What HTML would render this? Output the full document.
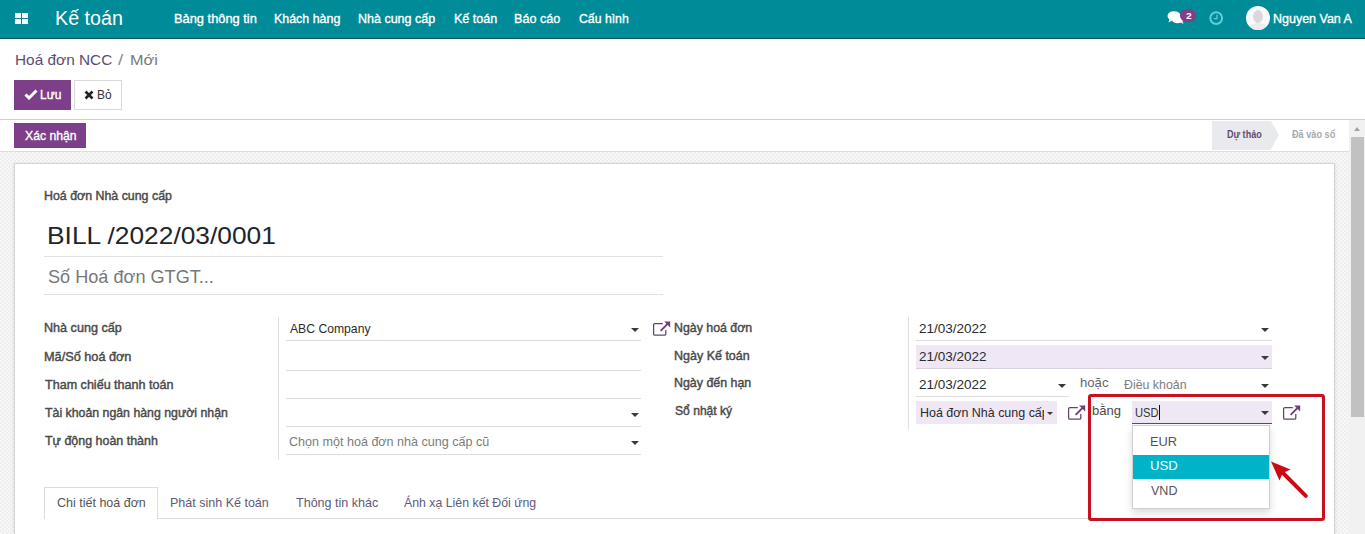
<!DOCTYPE html>
<html><head><meta charset="utf-8">
<style>
*{box-sizing:border-box;margin:0;padding:0}
html,body{width:1365px;height:534px;overflow:hidden;background:#fff;font-family:"Liberation Sans",sans-serif;font-size:13px;color:#212529;position:relative}
.r{position:absolute}
.t{position:absolute;white-space:nowrap;line-height:30px;font-family:"Liberation Sans",sans-serif}
.ul{position:absolute;height:1px;background:#dcdcdc}
.caret{position:absolute;width:0;height:0;border-left:4px solid transparent;border-right:4px solid transparent;border-top:4px solid #3a3a3a}
.pur{background:#efe7f3}
</style></head><body>
<!-- navbar -->
<div class="r" style="left:0;top:0;width:1365px;height:38px;background:#008b99"></div>
<div class="r" style="left:0;top:38px;width:1365px;height:1px;background:#0b5560"></div>
<div class="r" style="left:15px;top:13px;width:6px;height:5px;background:#fff"></div>
<div class="r" style="left:22px;top:13px;width:6px;height:5px;background:#fff"></div>
<div class="r" style="left:15px;top:19px;width:6px;height:5px;background:#fff"></div>
<div class="r" style="left:22px;top:19px;width:6px;height:5px;background:#fff"></div>
<!-- chat icon -->
<svg class="r" style="left:1166px;top:9px" width="20" height="17" viewBox="0 0 20 17">
  <ellipse cx="8" cy="7" rx="6.5" ry="4.8" fill="#fff"/>
  <path d="M3.5 10 L2.5 13.5 L7 11 Z" fill="#fff"/>
  <ellipse cx="11.5" cy="10.5" rx="5.5" ry="3.8" fill="#fff"/>
  <path d="M14 13 L17.5 15 L16 11 Z" fill="#fff"/>
</svg>
<div class="r" style="left:1180px;top:9px;width:16px;height:13px;border-radius:7px;background:#853d88"></div>
<!-- clock -->
<svg class="r" style="left:1208px;top:10px" width="16" height="16" viewBox="0 0 16 16">
  <circle cx="8.2" cy="8.1" r="5.9" fill="none" stroke="#5cd0da" stroke-width="2"/>
  <path d="M9 4.8 V8.6 H5.8" fill="none" stroke="#5cd0da" stroke-width="1.3"/>
</svg>
<!-- avatar -->
<div class="r" style="left:1246px;top:6px;width:24px;height:24px;border-radius:50%;background:#fbfbfb;overflow:hidden">
  <div class="r" style="left:7px;top:4px;width:10px;height:13px;border-radius:50%;background:#d9d9d9"></div>
  <div class="r" style="left:3px;top:17px;width:18px;height:12px;border-radius:50% 50% 0 0;background:#ececec"></div>
</div>

<!-- control panel -->
<div class="r" style="left:14px;top:80px;width:57px;height:30px;background:#7d3f89"></div>
<svg class="r" style="left:24px;top:89px" width="14" height="11" viewBox="0 0 14 11">
  <path d="M1.5 5.5 L5 9 L12.5 1.5" fill="none" stroke="#fff" stroke-width="3"/>
</svg>
<div class="r" style="left:74px;top:80px;width:48px;height:30px;background:#fff;border:1px solid #d9d9d9"></div>
<svg class="r" style="left:84px;top:90px" width="10" height="10" viewBox="0 0 10 10">
  <path d="M1.5 1.5 L8.5 8.5 M8.5 1.5 L1.5 8.5" fill="none" stroke="#222" stroke-width="2.6"/>
</svg>
<div class="r" style="left:0;top:119px;width:1365px;height:1px;background:#cfcfcf"></div>
<div class="r" style="left:14px;top:123px;width:72px;height:25px;background:#7d3f89"></div>
<div class="r" style="left:1212px;top:121px;width:59px;height:29px;background:#e8eaee"></div>
<div class="r" style="left:1271px;top:121px;width:0;height:0;border-top:14.5px solid transparent;border-bottom:14.5px solid transparent;border-left:8px solid #e8eaee"></div>
<div class="r" style="left:0;top:151px;width:1349px;height:1px;background:#dedede"></div>

<!-- background -->
<div class="r" style="left:0;top:152px;width:1349px;height:382px;background-color:#f3f3f3;background-image:repeating-conic-gradient(#eeeeee 0 25%, #f8f8f8 0 50%);background-size:4px 4px"></div>
<!-- sheet -->
<div class="r" style="left:14px;top:163px;width:1321px;height:400px;background:#fff;border:1px solid #d4d4d4;box-shadow:0 1px 4px rgba(0,0,0,.10)"></div>

<!-- form lines -->
<div class="ul" style="left:44px;top:256px;width:619px;background:#e2e2e2"></div>
<div class="ul" style="left:44px;top:294px;width:619px;background:#e2e2e2"></div>

<div class="r" style="left:278px;top:317px;width:1px;height:143px;background:#e0e0e0"></div>
<div class="ul" style="left:286px;top:340px;width:355px"></div>
<div class="ul" style="left:286px;top:370px;width:355px"></div>
<div class="ul" style="left:286px;top:398px;width:355px"></div>
<div class="ul" style="left:286px;top:426px;width:355px"></div>
<div class="ul" style="left:286px;top:454px;width:355px"></div>
<div class="caret" style="left:631px;top:328px"></div>
<div class="caret" style="left:631px;top:413px"></div>
<div class="caret" style="left:631px;top:441px"></div>
<svg class="r" style="left:652px;top:320px" width="19" height="17" viewBox="0 0 19 17">
  <path d="M10.8 3.6 H3 Q1.6 3.6 1.6 5 V13.9 Q1.6 15.2 3 15.2 H12.4 Q13.8 15.2 13.8 13.9 V10" fill="none" stroke="#5e4766" stroke-width="1.25"/>
  <path d="M8.6 10.8 L15.6 3.8" fill="none" stroke="#6e3c7a" stroke-width="1.9"/>
  <path d="M12.2 1.4 H18.2 V7.4 Z" fill="#703c7c"/>
</svg>

<div class="r" style="left:908px;top:317px;width:1px;height:113px;background:#e0e0e0"></div>
<div class="ul" style="left:916px;top:340px;width:356px"></div>
<div class="caret" style="left:1261px;top:328px"></div>
<div class="r pur" style="left:916px;top:345px;width:356px;height:23px"></div>
<div class="ul" style="left:916px;top:368px;width:356px;background:#d8d0dc"></div>
<div class="caret" style="left:1261px;top:356px"></div>
<div class="ul" style="left:916px;top:396px;width:153px"></div>
<div class="caret" style="left:1058px;top:384px"></div>
<div class="ul" style="left:1116px;top:396px;width:156px"></div>
<div class="caret" style="left:1261px;top:384px"></div>
<div class="r pur" style="left:916px;top:401px;width:141px;height:23px"></div>
<div class="r" style="left:916px;top:401px;width:128px;height:23px;overflow:hidden">
<div class="t" style="left:3.54px;top:-3.00px;font-size:13px;font-weight:400;color:#2b2b2b;transform:scaleX(0.9586);transform-origin:0 0;">Hoá đơn Nhà cung cấp</div>
</div>
<div class="caret" style="left:1047px;top:412px;border-left-width:3px;border-right-width:3px;border-top-width:3px"></div>
<svg class="r" style="left:1067px;top:404px" width="19" height="17" viewBox="0 0 19 17">
  <path d="M10.8 3.6 H3 Q1.6 3.6 1.6 5 V13.9 Q1.6 15.2 3 15.2 H12.4 Q13.8 15.2 13.8 13.9 V10" fill="none" stroke="#5e4766" stroke-width="1.25"/>
  <path d="M8.6 10.8 L15.6 3.8" fill="none" stroke="#6e3c7a" stroke-width="1.9"/>
  <path d="M12.2 1.4 H18.2 V7.4 Z" fill="#703c7c"/>
</svg>
<div class="r pur" style="left:1132px;top:401px;width:140px;height:23px"></div>
<div class="r" style="left:1132px;top:423px;width:140px;height:1px;background:#5e4a66"></div>
<div class="caret" style="left:1261px;top:411px"></div>
<div class="r" style="left:1159px;top:405px;width:1px;height:15px;background:#111"></div>
<svg class="r" style="left:1282px;top:404px" width="19" height="17" viewBox="0 0 19 17">
  <path d="M10.8 3.6 H3 Q1.6 3.6 1.6 5 V13.9 Q1.6 15.2 3 15.2 H12.4 Q13.8 15.2 13.8 13.9 V10" fill="none" stroke="#5e4766" stroke-width="1.25"/>
  <path d="M8.6 10.8 L15.6 3.8" fill="none" stroke="#6e3c7a" stroke-width="1.9"/>
  <path d="M12.2 1.4 H18.2 V7.4 Z" fill="#703c7c"/>
</svg>

<!-- tabs -->
<div class="ul" style="left:44px;top:518px;width:1045px"></div>
<div class="r" style="left:44px;top:487px;width:114px;height:32px;background:#fff;border:1px solid #dcdcdc;border-bottom:none"></div>

<!-- dropdown -->
<div class="r" style="left:1132px;top:425px;width:138px;height:84px;background:#fff;border:1px solid #cfcfcf;box-shadow:0 4px 8px rgba(0,0,0,.15)"></div>
<div class="r" style="left:1133px;top:455px;width:136px;height:24px;background:#00b3c7"></div>

<div class="t" style="left:55.23px;top:2.50px;font-size:20px;font-weight:400;color:#ffffff;transform:scaleX(0.9848);transform-origin:0 0;">Kế toán</div>
<div class="t" style="left:174.01px;top:4.00px;font-size:13px;font-weight:400;color:#ffffff;transform:scaleX(0.9878);transform-origin:0 0;-webkit-text-stroke:0.35px currentColor;">Bảng thông tin</div>
<div class="t" style="left:273.54px;top:4.00px;font-size:13px;font-weight:400;color:#ffffff;transform:scaleX(0.9559);transform-origin:0 0;-webkit-text-stroke:0.35px currentColor;">Khách hàng</div>
<div class="t" style="left:358.04px;top:4.00px;font-size:13px;font-weight:400;color:#ffffff;transform:scaleX(0.9620);transform-origin:0 0;-webkit-text-stroke:0.35px currentColor;">Nhà cung cấp</div>
<div class="t" style="left:453.53px;top:4.00px;font-size:13px;font-weight:400;color:#ffffff;transform:scaleX(0.9651);transform-origin:0 0;-webkit-text-stroke:0.35px currentColor;">Kế toán</div>
<div class="t" style="left:514.03px;top:4.00px;font-size:13px;font-weight:400;color:#ffffff;transform:scaleX(0.9681);transform-origin:0 0;-webkit-text-stroke:0.35px currentColor;">Báo cáo</div>
<div class="t" style="left:579.00px;top:4.00px;font-size:13px;font-weight:400;color:#ffffff;transform:scaleX(0.9423);transform-origin:0 0;-webkit-text-stroke:0.35px currentColor;">Cấu hình</div>
<div class="t" style="left:1272.84px;top:4.00px;font-size:13px;font-weight:400;color:#ffffff;transform:scaleX(0.9605);transform-origin:0 0;-webkit-text-stroke:0.35px currentColor;">Nguyen Van A</div>
<div class="t" style="left:1185.80px;top:1.40px;font-size:9.5px;font-weight:700;color:#ffffff;transform:scaleX(1.0800);transform-origin:0 0;">2</div>
<div class="t" style="left:14.57px;top:45.00px;font-size:15px;font-weight:400;color:#585070;transform:scaleX(1.0258);transform-origin:0 0;">Hoá đơn NCC</div>
<div class="t" style="left:118.00px;top:45.00px;font-size:15px;font-weight:400;color:#8a8a8a;transform:scaleX(1.2500);transform-origin:0 0;">/</div>
<div class="t" style="left:129.92px;top:45.00px;font-size:15px;font-weight:400;color:#7a7a7a;transform:scaleX(1.0833);transform-origin:0 0;">Mới</div>
<div class="t" style="left:39.78px;top:80.30px;font-size:13px;font-weight:400;color:#ffffff;transform:scaleX(0.9227);transform-origin:0 0;-webkit-text-stroke:0.35px currentColor;">Lưu</div>
<div class="t" style="left:97.28px;top:80.30px;font-size:13px;font-weight:400;color:#333333;transform:scaleX(0.9200);transform-origin:0 0;">Bỏ</div>
<div class="t" style="left:24.60px;top:121.30px;font-size:13px;font-weight:400;color:#ffffff;transform:scaleX(0.9382);transform-origin:0 0;-webkit-text-stroke:0.35px currentColor;">Xác nhận</div>
<div class="t" style="left:1226.59px;top:120.00px;font-size:10px;font-weight:700;color:#634f6c;transform:scaleX(0.9054);transform-origin:0 0;">Dự thảo</div>
<div class="t" style="left:1291.60px;top:120.00px;font-size:10px;font-weight:700;color:#a8a8b0;transform:scaleX(0.9149);transform-origin:0 0;">Đã vào sổ</div>
<div class="t" style="left:44.15px;top:181.00px;font-size:13px;font-weight:400;color:#4a4a4a;transform:scaleX(0.9526);transform-origin:0 0;-webkit-text-stroke:0.45px currentColor;">Hoá đơn Nhà cung cấp</div>
<div class="t" style="left:47.31px;top:221.30px;font-size:24px;font-weight:400;color:#212529;transform:scaleX(1.0971);transform-origin:0 0;">BILL /2022/03/0001</div>
<div class="t" style="left:47.99px;top:262.00px;font-size:18px;font-weight:400;color:#787878;transform:scaleX(1.0062);transform-origin:0 0;">Số Hoá đơn GTGT...</div>
<div class="t" style="left:44.03px;top:312.50px;font-size:13px;font-weight:400;color:#4a4a4a;transform:scaleX(0.9684);transform-origin:0 0;-webkit-text-stroke:0.45px currentColor;">Nhà cung cấp</div>
<div class="t" style="left:44.02px;top:342.30px;font-size:13px;font-weight:400;color:#4a4a4a;transform:scaleX(0.9773);transform-origin:0 0;-webkit-text-stroke:0.45px currentColor;">Mã/Số hoá đơn</div>
<div class="t" style="left:45.00px;top:370.30px;font-size:13px;font-weight:400;color:#4a4a4a;transform:scaleX(0.9662);transform-origin:0 0;-webkit-text-stroke:0.45px currentColor;">Tham chiếu thanh toán</div>
<div class="t" style="left:45.00px;top:398.30px;font-size:13px;font-weight:400;color:#4a4a4a;transform:scaleX(0.9482);transform-origin:0 0;-webkit-text-stroke:0.45px currentColor;">Tài khoản ngân hàng người nhận</div>
<div class="t" style="left:45.00px;top:426.30px;font-size:13px;font-weight:400;color:#4a4a4a;transform:scaleX(0.9573);transform-origin:0 0;-webkit-text-stroke:0.45px currentColor;">Tự động hoàn thành</div>
<div class="t" style="left:673.75px;top:312.50px;font-size:13px;font-weight:400;color:#4a4a4a;transform:scaleX(0.9506);transform-origin:0 0;-webkit-text-stroke:0.45px currentColor;">Ngày hoá đơn</div>
<div class="t" style="left:673.74px;top:340.50px;font-size:13px;font-weight:400;color:#4a4a4a;transform:scaleX(0.9610);transform-origin:0 0;-webkit-text-stroke:0.45px currentColor;">Ngày Kế toán</div>
<div class="t" style="left:673.75px;top:368.00px;font-size:13px;font-weight:400;color:#4a4a4a;transform:scaleX(0.9537);transform-origin:0 0;-webkit-text-stroke:0.45px currentColor;">Ngày đến hạn</div>
<div class="t" style="left:674.70px;top:396.00px;font-size:13px;font-weight:400;color:#4a4a4a;transform:scaleX(0.9306);transform-origin:0 0;-webkit-text-stroke:0.45px currentColor;">Sổ nhật ký</div>
<div class="t" style="left:290.00px;top:314.40px;font-size:13px;font-weight:400;color:#2b2b2b;transform:scaleX(0.9360);transform-origin:0 0;">ABC Company</div>
<div class="t" style="left:289.03px;top:427.00px;font-size:13px;font-weight:400;color:#7c7c7c;transform:scaleX(0.9660);transform-origin:0 0;">Chọn một hoá đơn nhà cung cấp cũ</div>
<div class="t" style="left:919.46px;top:313.80px;font-size:13px;font-weight:400;color:#2b2b2b;transform:scaleX(1.0391);transform-origin:0 0;">21/03/2022</div>
<div class="t" style="left:919.46px;top:342.00px;font-size:13px;font-weight:400;color:#2b2b2b;transform:scaleX(1.0391);transform-origin:0 0;">21/03/2022</div>
<div class="t" style="left:919.46px;top:369.70px;font-size:13px;font-weight:400;color:#2b2b2b;transform:scaleX(1.0391);transform-origin:0 0;">21/03/2022</div>
<div class="t" style="left:1079.79px;top:368.00px;font-size:13px;font-weight:400;color:#666666;transform:scaleX(1.0111);transform-origin:0 0;">hoặc</div>
<div class="t" style="left:1124.40px;top:369.60px;font-size:13px;font-weight:400;color:#7e7e7e;transform:scaleX(0.9508);transform-origin:0 0;">Điều khoản</div>
<div class="t" style="left:1092.00px;top:395.60px;font-size:13px;font-weight:400;color:#4a4a4a;">bằng</div>
<div class="t" style="left:1134.84px;top:397.80px;font-size:13px;font-weight:400;color:#333333;transform:scaleX(0.8577);transform-origin:0 0;">USD</div>
<div class="t" style="left:1150.31px;top:427.00px;font-size:13px;font-weight:400;color:#555555;transform:scaleX(0.9885);transform-origin:0 0;">EUR</div>
<div class="t" style="left:1150.29px;top:450.70px;font-size:13px;font-weight:400;color:#ffffff;transform:scaleX(1.0077);transform-origin:0 0;">USD</div>
<div class="t" style="left:1151.30px;top:476.00px;font-size:13px;font-weight:400;color:#555555;transform:scaleX(0.9630);transform-origin:0 0;">VND</div>
<div class="t" style="left:56.54px;top:488.00px;font-size:13px;font-weight:400;color:#555555;transform:scaleX(0.9615);transform-origin:0 0;">Chi tiết hoá đơn</div>
<div class="t" style="left:170.44px;top:488.00px;font-size:13px;font-weight:400;color:#5e5a78;transform:scaleX(0.9624);transform-origin:0 0;">Phát sinh Kế toán</div>
<div class="t" style="left:296.00px;top:488.00px;font-size:13px;font-weight:400;color:#5e5a78;transform:scaleX(0.9647);transform-origin:0 0;">Thông tin khác</div>
<div class="t" style="left:403.70px;top:488.00px;font-size:13px;font-weight:400;color:#5e5a78;transform:scaleX(0.9475);transform-origin:0 0;">Ánh xạ Liên kết Đối ứng</div>

<!-- red annotation -->
<div class="r" style="left:1088px;top:394px;width:237px;height:127px;border:3px solid #c8101e;border-radius:3px"></div>
<svg class="r" style="left:1265px;top:455px" width="50" height="48" viewBox="0 0 50 48">
  <path d="M6 6.4 L25.5 14.5 L19.5 17.2 L17 19.6 L14.5 25.5 Z" fill="#cc0a14"/>
  <path d="M16 16 L40.8 40.8" stroke="#cc0a14" stroke-width="4" stroke-linecap="round"/>
</svg>

<!-- scrollbar -->
<div class="r" style="left:1349px;top:120px;width:16px;height:414px;background:#f1f1f1"></div>
<div class="r" style="left:1354px;top:127px;width:0;height:0;border-left:3.5px solid transparent;border-right:3.5px solid transparent;border-bottom:4px solid #a3a3a3"></div>
<div class="r" style="left:1351px;top:137px;width:13px;height:280px;background:#c1c1c1"></div>
</body></html>
